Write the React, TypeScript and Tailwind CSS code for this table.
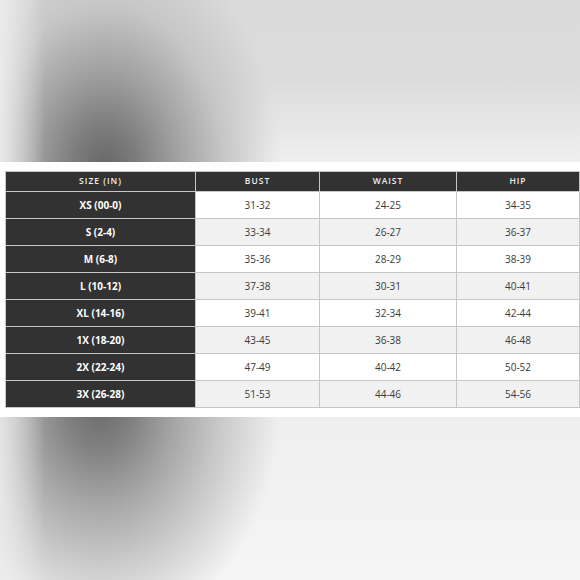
const rows = [
  ['XS (00-0)', '31-32', '24-25', '34-35'],
  ['S (2-4)', '33-34', '26-27', '36-37'],
  ['M (6-8)', '35-36', '28-29', '38-39'],
  ['L (10-12)', '37-38', '30-31', '40-41'],
  ['XL (14-16)', '39-41', '32-34', '42-44'],
  ['1X (18-20)', '43-45', '36-38', '46-48'],
  ['2X (22-24)', '47-49', '40-42', '50-52'],
  ['3X (26-28)', '51-53', '44-46', '54-56'],
];

const headers = ['SIZE (IN)', 'BUST', 'WAIST', 'HIP'];

export default function App() {
  return (
    <div className="w-[580px] h-[580px] overflow-hidden flex flex-col bg-white font-['Open_Sans',sans-serif]">
      {/* top backdrop */}
      <div className="h-[162px] shrink-0 bg-[linear-gradient(to_right,rgba(238,238,238,0.9)_0px,rgba(238,238,238,0)_45px),radial-gradient(ellipse_175px_240px_at_105px_170px,#666666_0%,#7c7c7c_18%,#a2a2a2_42%,#c6c6c6_68%,rgba(214,214,214,0)_100%),linear-gradient(to_bottom,#dadada_0%,#dcdcdc_50%,#efefef_100%)]" />

      {/* size chart */}
      <div className="flex-1 pt-[9px] pl-[5px]">
        <div className="w-[575px] grid grid-cols-[189px_123px_136px_122px] gap-px p-px bg-[#c6c6c6]">
          {headers.map((h) => (
            <div
              key={h}
              className="h-[19px] bg-[#323232] flex items-center justify-center text-[8.5px] tracking-[1px] text-[#eeeeee] font-semibold"
            >
              {h}
            </div>
          ))}
          {rows.map((r, i) => (
            <>
              <div
                key={r[0]}
                className="h-[26px] bg-[#323232] flex items-center justify-center text-[10px] font-bold text-white"
              >
                {r[0]}
              </div>
              {r.slice(1).map((v, j) => (
                <div
                  key={r[0] + j}
                  className={
                    'h-[26px] flex items-center justify-center text-[10px] text-[#3a3a3a] ' +
                    (i % 2 === 0 ? 'bg-white' : 'bg-[#f1f1f1]')
                  }
                >
                  {v}
                </div>
              ))}
            </>
          ))}
        </div>
      </div>

      {/* bottom backdrop */}
      <div className="h-[163px] shrink-0 bg-[linear-gradient(to_right,rgba(236,236,236,0.85)_0px,rgba(236,236,236,0)_45px),radial-gradient(ellipse_180px_230px_at_100px_-10px,#6c6c6c_0%,#808080_18%,#a6a6a6_42%,#cacaca_68%,rgba(238,238,238,0)_100%),linear-gradient(to_bottom,#efefef_0%,#f5f5f5_100%)]" />
    </div>
  );
}
